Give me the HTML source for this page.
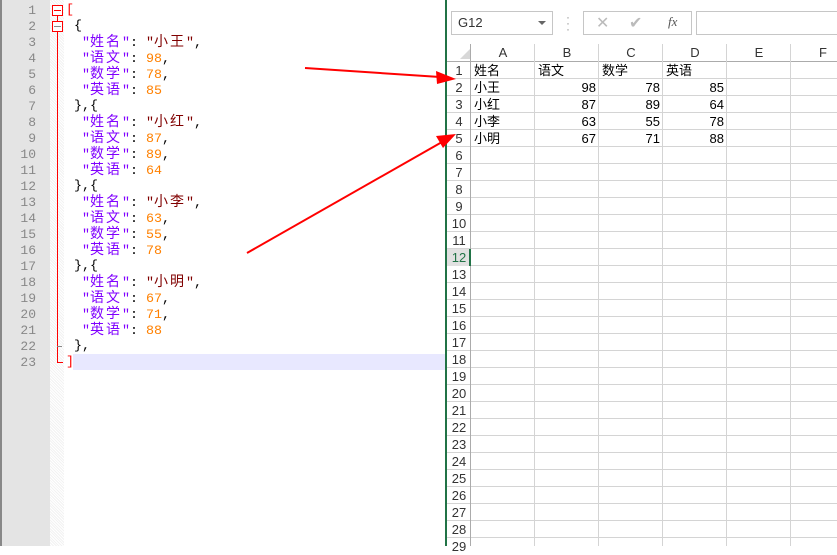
<!DOCTYPE html>
<html><head><meta charset="utf-8"><style>
*{margin:0;padding:0;box-sizing:border-box}
body{width:837px;height:546px;overflow:hidden;background:#fff;position:relative;font-family:"Liberation Sans","Noto Sans CJK SC",sans-serif}
.ab{position:absolute}
#gut{left:0;top:0;width:50px;height:546px;background:#e4e4e4;border-left:2px solid #888}
#fold{left:50px;top:0;width:14px;height:546px;background:repeating-linear-gradient(45deg,#f2f2f2 0 1px,#fff 1px 2px)}
.ln{position:absolute;left:2px;width:34px;text-align:right;font:13px "Liberation Mono",monospace;color:#888;height:16px;line-height:16px}
.cl{position:absolute;left:66px;font:13.33px "Liberation Mono","Noto Sans CJK SC",monospace;height:16px;line-height:16px;white-space:pre;color:#000}
.k{color:#8000ff}.s{color:#800000}.n{color:#ff8000}.p{color:#000}.r{color:#f00}
.j{font-size:14px;letter-spacing:2px}
#xl{left:445px;top:0;width:392px;height:546px;background:#fff;border-left:2px solid #217346}
.rh{position:absolute;left:447px;width:24px;text-align:center;font-size:13px;color:#333;height:17px;line-height:17px}
.ch{position:absolute;top:44px;height:18px;line-height:18px;text-align:center;font-size:13px;color:#333}
.c{position:absolute;font-size:13px;height:17px;line-height:17px;color:#000;font-family:"Liberation Sans","Noto Sans CJK SC",sans-serif}
.num{text-align:right;width:61px}
</style></head><body>
<div id="gut" class="ab"></div>
<div id="fold" class="ab"></div>
<div class="ab" style="left:73px;top:354px;width:372px;height:16px;background:#e8e8ff"></div>
<div class="ab" style="left:52px;top:5px;width:11px;height:11px;border:1px solid #f00;background:#fff"></div>
<div class="ab" style="left:54px;top:10px;width:7px;height:1px;background:#f00"></div>
<div class="ab" style="left:52px;top:21px;width:11px;height:11px;border:1px solid #f00;background:#fff"></div>
<div class="ab" style="left:54px;top:26px;width:7px;height:1px;background:#888"></div>
<div class="ab" style="left:57px;top:16px;width:1px;height:5px;background:#f00"></div>
<div class="ab" style="left:57px;top:32px;width:1px;height:331px;background:#f00"></div>
<div class="ab" style="left:57px;top:362px;width:6px;height:1px;background:#f00"></div>
<div class="ab" style="left:57px;top:346px;width:5px;height:1px;background:#888"></div>

<div class="ln" style="top:3px">1</div><div class="ln" style="top:19px">2</div><div class="ln" style="top:35px">3</div><div class="ln" style="top:51px">4</div><div class="ln" style="top:67px">5</div><div class="ln" style="top:83px">6</div><div class="ln" style="top:99px">7</div><div class="ln" style="top:115px">8</div><div class="ln" style="top:131px">9</div><div class="ln" style="top:147px">10</div><div class="ln" style="top:163px">11</div><div class="ln" style="top:179px">12</div><div class="ln" style="top:195px">13</div><div class="ln" style="top:211px">14</div><div class="ln" style="top:227px">15</div><div class="ln" style="top:243px">16</div><div class="ln" style="top:259px">17</div><div class="ln" style="top:275px">18</div><div class="ln" style="top:291px">19</div><div class="ln" style="top:307px">20</div><div class="ln" style="top:323px">21</div><div class="ln" style="top:339px">22</div><div class="ln" style="top:355px">23</div>

<div class="cl r" style="top:3px">[</div>
<div class="cl" style="top:19px;left:74px">{</div>
<div class="cl" style="top:35px;left:82px"><span class="k">"<span class="j">姓名</span>"</span>: <span class="s">"<span class="j">小王</span>"</span>,</div>
<div class="cl" style="top:51px;left:82px"><span class="k">"<span class="j">语文</span>"</span>: <span class="n">98</span>,</div>
<div class="cl" style="top:67px;left:82px"><span class="k">"<span class="j">数学</span>"</span>: <span class="n">78</span>,</div>
<div class="cl" style="top:83px;left:82px"><span class="k">"<span class="j">英语</span>"</span>: <span class="n">85</span></div>
<div class="cl" style="top:99px;left:74px">},{</div>
<div class="cl" style="top:115px;left:82px"><span class="k">"<span class="j">姓名</span>"</span>: <span class="s">"<span class="j">小红</span>"</span>,</div>
<div class="cl" style="top:131px;left:82px"><span class="k">"<span class="j">语文</span>"</span>: <span class="n">87</span>,</div>
<div class="cl" style="top:147px;left:82px"><span class="k">"<span class="j">数学</span>"</span>: <span class="n">89</span>,</div>
<div class="cl" style="top:163px;left:82px"><span class="k">"<span class="j">英语</span>"</span>: <span class="n">64</span></div>
<div class="cl" style="top:179px;left:74px">},{</div>
<div class="cl" style="top:195px;left:82px"><span class="k">"<span class="j">姓名</span>"</span>: <span class="s">"<span class="j">小李</span>"</span>,</div>
<div class="cl" style="top:211px;left:82px"><span class="k">"<span class="j">语文</span>"</span>: <span class="n">63</span>,</div>
<div class="cl" style="top:227px;left:82px"><span class="k">"<span class="j">数学</span>"</span>: <span class="n">55</span>,</div>
<div class="cl" style="top:243px;left:82px"><span class="k">"<span class="j">英语</span>"</span>: <span class="n">78</span></div>
<div class="cl" style="top:259px;left:74px">},{</div>
<div class="cl" style="top:275px;left:82px"><span class="k">"<span class="j">姓名</span>"</span>: <span class="s">"<span class="j">小明</span>"</span>,</div>
<div class="cl" style="top:291px;left:82px"><span class="k">"<span class="j">语文</span>"</span>: <span class="n">67</span>,</div>
<div class="cl" style="top:307px;left:82px"><span class="k">"<span class="j">数学</span>"</span>: <span class="n">71</span>,</div>
<div class="cl" style="top:323px;left:82px"><span class="k">"<span class="j">英语</span>"</span>: <span class="n">88</span></div>
<div class="cl" style="top:339px;left:74px">},</div>
<div class="cl r" style="top:355px">]</div>

<div id="xl" class="ab"></div>
<div class="ab" style="left:451px;top:11px;width:102px;height:24px;border:1px solid #c6c6c6;font-size:13px;line-height:22px;padding-left:6px;color:#333">G12</div>
<div class="ab" style="left:538px;top:21px;width:0;height:0;border-left:4px solid transparent;border-right:4px solid transparent;border-top:4px solid #666"></div>
<div class="ab" style="left:566px;top:14px;font-size:12px;color:#999;line-height:6px">·<br>·<br>·</div>
<div class="ab" style="left:583px;top:11px;width:109px;height:24px;border:1px solid #c6c6c6"></div>
<div class="ab" style="left:596px;top:13px;font-size:16px;color:#bbb">✕</div>
<div class="ab" style="left:629px;top:13px;font-size:16px;color:#bbb">✔</div>
<div class="ab" style="left:668px;top:14px;font:italic 13px 'Liberation Serif',serif;color:#555">fx</div>
<div class="ab" style="left:696px;top:11px;width:145px;height:24px;border:1px solid #c6c6c6"></div>
<div class="ab" style="left:447px;top:44px;width:390px;height:18px;border-bottom:1px solid #ababab"></div>
<div class="ab" style="left:460px;top:49px;width:0;height:0;border-left:10px solid transparent;border-bottom:10px solid #d8d8d8"></div>
<div class="ab" style="left:471px;top:44px;width:366px;height:18px;background:repeating-linear-gradient(90deg,transparent 0 63px,#d4d4d4 63px 64px)"></div>
<div class="ch" style="left:471px;width:64px">A</div><div class="ch" style="left:535px;width:64px">B</div><div class="ch" style="left:599px;width:64px">C</div><div class="ch" style="left:663px;width:64px">D</div><div class="ch" style="left:727px;width:64px">E</div><div class="ch" style="left:791px;width:64px">F</div>
<div class="ab" style="left:447px;top:62px;width:390px;height:484px;background:repeating-linear-gradient(180deg,transparent 0 16px,#d4d4d4 16px 17px)"></div>
<div class="ab" style="left:471px;top:62px;width:366px;height:484px;background:repeating-linear-gradient(90deg,transparent 0 63px,#d4d4d4 63px 64px)"></div>
<div class="ab" style="left:470px;top:44px;width:1px;height:502px;background:#ababab"></div>
<div class="ab" style="left:447px;top:249px;width:24px;height:17px;border-right:2px solid #217346;background:#e1e1e1"></div>

<div class="rh" style="top:62px">1</div><div class="rh" style="top:79px">2</div><div class="rh" style="top:96px">3</div><div class="rh" style="top:113px">4</div><div class="rh" style="top:130px">5</div><div class="rh" style="top:147px">6</div><div class="rh" style="top:164px">7</div><div class="rh" style="top:181px">8</div><div class="rh" style="top:198px">9</div><div class="rh" style="top:215px">10</div><div class="rh" style="top:232px">11</div><div class="rh" style="top:249px;color:#217346">12</div><div class="rh" style="top:266px">13</div><div class="rh" style="top:283px">14</div><div class="rh" style="top:300px">15</div><div class="rh" style="top:317px">16</div><div class="rh" style="top:334px">17</div><div class="rh" style="top:351px">18</div><div class="rh" style="top:368px">19</div><div class="rh" style="top:385px">20</div><div class="rh" style="top:402px">21</div><div class="rh" style="top:419px">22</div><div class="rh" style="top:436px">23</div><div class="rh" style="top:453px">24</div><div class="rh" style="top:470px">25</div><div class="rh" style="top:487px">26</div><div class="rh" style="top:504px">27</div><div class="rh" style="top:521px">28</div><div class="rh" style="top:538px">29</div>

<div class="c" style="left:474px;top:62px">姓名</div><div class="c" style="left:538px;top:62px">语文</div><div class="c" style="left:602px;top:62px">数学</div><div class="c" style="left:666px;top:62px">英语</div>
<div class="c" style="left:474px;top:79px">小王</div><div class="c num" style="left:535px;top:79px">98</div><div class="c num" style="left:599px;top:79px">78</div><div class="c num" style="left:663px;top:79px">85</div>
<div class="c" style="left:474px;top:96px">小红</div><div class="c num" style="left:535px;top:96px">87</div><div class="c num" style="left:599px;top:96px">89</div><div class="c num" style="left:663px;top:96px">64</div>
<div class="c" style="left:474px;top:113px">小李</div><div class="c num" style="left:535px;top:113px">63</div><div class="c num" style="left:599px;top:113px">55</div><div class="c num" style="left:663px;top:113px">78</div>
<div class="c" style="left:474px;top:130px">小明</div><div class="c num" style="left:535px;top:130px">67</div><div class="c num" style="left:599px;top:130px">71</div><div class="c num" style="left:663px;top:130px">88</div>

<svg class="ab" style="left:0;top:0" width="837" height="546">
<line x1="305" y1="68" x2="440" y2="77" stroke="#f00" stroke-width="2"/>
<polygon points="456,79 436,71 437,84" fill="#f00"/>
<line x1="247" y1="253" x2="442" y2="142" stroke="#f00" stroke-width="2"/>
<polygon points="456,134 436,136 443,148" fill="#f00"/>
</svg>
</body></html>
